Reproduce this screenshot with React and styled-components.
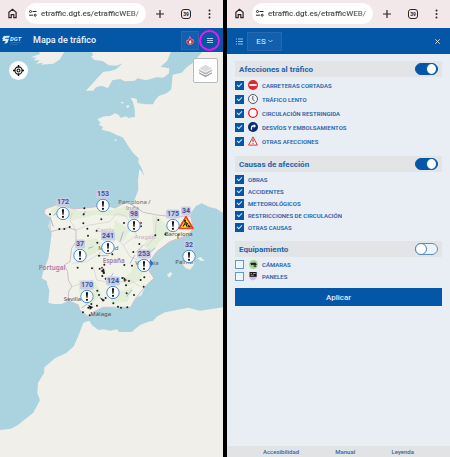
import React from "react";
import styled, { createGlobalStyle } from "styled-components";

const BLUE = "#0456a6";

const GlobalStyle = createGlobalStyle`
  *, *::before, *::after { box-sizing: border-box; }
  html, body, #root { height: 100%; }
  body { margin: 0; background: #000; font-family: Roboto, "Liberation Sans", sans-serif; }
  button, input { font: inherit; margin: 0; padding: 0; }
  button { border: 0; background: none; color: inherit; display: grid; place-items: center; }
  svg { display: block; }
`;

const Screens = styled.div`
  display: grid;
  grid-template-columns: 1fr 1fr;
  gap: 4px;
  min-height: 100%;
`;

const Phone = styled.section`
  display: flex;
  flex-direction: column;
  min-width: 0;
  background: #e8eef4;
`;

const BrowserBar = styled.div`
  display: flex;
  align-items: center;
  height: 28px;
  padding: 0 12px 1px 8px;
  background: #f2e7e9;
  color: #2c2527;
`;

const AddressPill = styled.label`
  display: flex;
  align-items: center;
  gap: 4px;
  flex: 1;
  min-width: 0;
  height: 21px;
  margin: 0 10px 0 8px;
  padding: 0 3px 0 4px;
  border-radius: 11px;
  background: #fff;
`;

const Address = styled.input`
  flex: 1;
  min-width: 0;
  border: 0;
  outline: 0;
  font-size: 8px;
  font-weight: 500;
  color: transparent;
  background: linear-gradient(90deg, #444 75%, #888) text;
`;

const BarActions = styled.div`
  display: flex;
  align-items: center;
  gap: 17px;
`;

const TabCount = styled.button`
  width: 10px;
  height: 10px;
  border: 1px solid #2c2527;
  border-radius: 3px;
  font-size: 5px;
  font-weight: 700;
`;

const AppHeader = styled.header`
  display: flex;
  align-items: center;
  height: ${(p) => p.$height};
  padding: ${(p) => p.$padding};
  background: ${BLUE};
  color: #e4eef8;
`;

const AppTitle = styled.h1`
  flex: 1;
  margin: 0 0 0 11px;
  font-size: 9px;
  font-weight: 600;
`;

const HeaderBox = styled.button`
  width: ${(p) => p.$width};
  height: 19px;
  border: 1px solid #2569b2;
  background: #1260ad;
`;

const MenuButton = styled.button`
  width: 21px;
  height: 21px;
  border: 2px solid #fb0ff0;
  border-radius: 50%;
`;

const LanguageButton = styled(HeaderBox)`
  display: flex;
  align-items: center;
  justify-content: center;
  gap: 2px;
  margin: 0 auto 0 4px;
  font-size: 8px;
`;

const MapArea = styled.main`
  position: relative;
  flex: 1;
  overflow: hidden;
  background: #aad3df;
`;

const MapDrawing = styled.svg`
  position: absolute;
  inset: 0;
  width: 100%;
  height: 100%;
`;

const LocateButton = styled.button`
  position: absolute;
  left: 9px;
  top: 9px;
  width: 19px;
  height: 19px;
  border-radius: 50%;
  background: #fff;
`;

const LayersButton = styled.button`
  position: absolute;
  right: 5px;
  top: 6px;
  width: 25px;
  height: 25px;
  border: 1px solid #b5bcbd;
  border-radius: 2px;
  background: #fff;
`;

const Pin = styled.button`
  position: absolute;
  left: ${(p) => p.$x}px;
  top: ${(p) => p.$y}px;
  display: flex;
  flex-direction: column;
  align-items: center;
  transform: translate(-50%, -50%);
`;

const PinCount = styled.span`
  padding: 0 1px;
  border-radius: 2px;
  background: #c9cde5;
  color: #3e55a0;
  font: 700 7px/9px Roboto, sans-serif;
`;

const Panel = styled.form`
  display: flex;
  flex-direction: column;
  gap: 8px;
  flex: 1;
  padding: 7px 8px;
  color: #1f62a9;
`;

const Group = styled.section`
  display: flex;
  flex-direction: column;
`;

const GroupHeader = styled.label`
  display: flex;
  align-items: center;
  justify-content: space-between;
  height: 16px;
  margin-bottom: 1px;
  padding: 0 4px;
  background: #e3e4e6;
  font-size: 8px;
  font-weight: 700;
`;

const Switch = styled.input`
  appearance: none;
  display: flex;
  align-items: center;
  width: 23px;
  height: 12px;
  border: 1px solid #5b8fc4;
  border-radius: 6px;
  background: #eef3f8;

  &::before {
    content: "";
    width: 12px;
    height: 12px;
    margin-left: -1px;
    border: 1px solid #4a84be;
    border-radius: 50%;
    background: #fff;
  }

  &:checked {
    border-color: ${BLUE};
    background: ${BLUE};
  }

  &:checked::before {
    margin-left: 10px;
    border-color: ${BLUE};
  }
`;

const OptionRow = styled.label`
  display: flex;
  align-items: center;
  gap: 4px;
  height: ${(p) => p.$height};
  font-size: 6px;
  font-weight: 600;
`;

const OptionIcon = styled.span`
  display: grid;
  place-items: center;
  width: 10px;
  height: 10px;
`;

const Check = styled.input`
  appearance: none;
  display: grid;
  place-items: center;
  width: 9px;
  height: 9px;
  border: 1px solid #5f9bc9;
  background: #f1f6fa;

  &:checked {
    border-color: ${BLUE};
    background: ${BLUE};
  }

  &:checked::before {
    content: "";
    width: 5px;
    height: 3px;
    border: solid #d4e6f6;
    border-width: 0 0 1px 1px;
    transform: translateY(-1px) rotate(-45deg);
  }
`;

const ApplyButton = styled.button`
  height: 18px;
  margin-top: -2px;
  background: ${BLUE};
  color: #e4eef8;
  font-size: 8px;
  font-weight: 500;
`;

const Footer = styled.footer`
  display: flex;
  justify-content: space-between;
  height: 11px;
  padding: 0 36px;
  background: #e2e3e4;
`;

const FooterLink = styled.a`
  color: #2a69ab;
  font-size: 6px;
  font-weight: 500;
  line-height: 11px;
  text-decoration: none;
`;

const HomeIcon = () => (
  <svg width="9" height="11" viewBox="0 0 9 11" fill="none" stroke="currentColor" strokeWidth="1.2">
    <path d="M.9 4.3 4.5 1.3 8.1 4.3V9.6H5.8V6.6H3.2V9.6H.9Z" />
  </svg>
);

const TuneIcon = () => (
  <svg width="8" height="7" viewBox="0 0 8 7" fill="none" stroke="currentColor" strokeWidth="1">
    <circle cx="1.5" cy="1.5" r="1" /><path d="M3.5 1.5H7.5M0 5.2H4" /><circle cx="6.2" cy="5.2" r="1" />
  </svg>
);

const PlusIcon = () => (
  <svg width="8" height="8" viewBox="0 0 8 8" stroke="currentColor" strokeWidth="1.2"><path d="M4 0V8M0 4H8" /></svg>
);

const DotsIcon = () => (
  <svg width="3" height="10" viewBox="0 0 3 10" fill="currentColor">
    <circle cx="1.5" cy="1.6" r="1" /><circle cx="1.5" cy="5" r="1" /><circle cx="1.5" cy="8.4" r="1" />
  </svg>
);

const Logo = () => (
  <svg width="20" height="11" viewBox="0 0 20 11" role="img" aria-label="DGT">
    <path d="M1.8 1 8 .8 6.8 2.8H3.5L3 3.7H7L5.3 8 2.2 8.8 3.8 6H.2L1.4 4.4 0 4Z" fill="#dcebf8" />
    <text x="8" y="6" fontFamily="Roboto, sans-serif" fontSize="6" fontWeight="700" fontStyle="italic" fill="#dcebf8">DGT</text>
    <path d="M8 7.5H19M8 9.3H16" stroke="#3f82c2" strokeWidth=".6" />
  </svg>
);

const FlameIcon = () => (
  <svg width="8" height="9" viewBox="0 0 8 9">
    <path d="M3.6.5C3.8 2 6.4 2.6 6 4.1L7.3 3.6C8 7 6.4 8.5 4 8.5S0 7.2.7 4.2L2 5C2 3 4 2.5 3.6.5Z" fill="#e51b2b" stroke="#f1b9c5" strokeWidth=".5" />
    <path d="M4.2 4C5.6 5.2 6 7.4 4.3 7.6S2.2 6.3 4.2 4Z" fill="#fff" />
  </svg>
);

const MenuIcon = () => (
  <svg width="6" height="7" viewBox="0 0 6 7" stroke="#a9d1ee" strokeWidth="1"><path d="M0 1.5H6M0 3.5H6M0 5.5H6" /></svg>
);

const ListIcon = () => (
  <svg width="7" height="7" viewBox="0 0 7 7" stroke="#c7def3" strokeWidth=".8"><path d="M0 1H1M2 1H7M0 3.5H1M2 3.5H7M0 6H1M2 6H7" /></svg>
);

const ChevronIcon = () => (
  <svg width="5" height="4" viewBox="0 0 5 4" fill="none" stroke="currentColor" strokeWidth=".7"><path d="M.5 1 2.5 3 4.5 1" /></svg>
);

const CloseIcon = () => (
  <svg width="5" height="5" viewBox="0 0 5 5" stroke="currentColor" strokeWidth=".9"><path d="M.3.3 4.7 4.7M4.7.3.3 4.7" /></svg>
);

const LocateIcon = () => (
  <svg width="11" height="11" viewBox="0 0 12 12" fill="none" stroke="#111" strokeWidth="1.2">
    <circle cx="6" cy="6" r="4" /><circle cx="6" cy="6" r="1.6" /><path d="M6 0V2.6M6 9.4V12M0 6H2.6M9.4 6H12" strokeWidth="1.5" />
  </svg>
);

const LayersIcon = () => (
  <svg width="15" height="14" viewBox="0 0 15 14">
    <path d="M1 9.6 7.5 13.3 14 9.6V8.2L7.5 11.4 1 8.2Z" fill="#a0a0a0" />
    <path d="M1 7 7.5 10.7 14 7V5.6L7.5 8.8 1 5.6Z" fill="#b4b4b4" />
    <path d="M1 4.4 7.5.8 14 4.4 7.5 8Z" fill="#dcdcdc" />
  </svg>
);

const AlertIcon = () => (
  <svg width="14" height="14" viewBox="0 0 14 14">
    <circle cx="7" cy="7" r="6.2" fill="#fff" stroke="#498fce" />
    <path d="M8.1 2.8 7.6 8.2H6.4L5.9 2.8Z" fill="#111" /><circle cx="7" cy="10.3" r="1.1" fill="#111" />
  </svg>
);

const WorksIcon = () => (
  <svg width="16" height="14" viewBox="0 0 16 14">
    <path d="M8 1.2 15 13H1Z" fill="#ffdc18" stroke="#ef3a24" strokeWidth="1.6" strokeLinejoin="round" />
    <circle cx="7" cy="5.2" r=".9" /><path d="M6.5 6 9.5 8.4 8 9 9 11M7.3 7.5 5 11M10 9.3 12 11.2H9.5" fill="none" stroke="#15170c" strokeWidth="1.1" />
  </svg>
);

const optionIcons = {
  closed: (
    <svg width="10" height="10" viewBox="0 0 10 10"><circle cx="5" cy="5" r="5" fill="#dc2932" /><path d="M1.4 5H8.6" stroke="#fff" strokeWidth="1.8" /></svg>
  ),
  slow: (
    <svg width="10" height="10" viewBox="0 0 10 10" fill="none" stroke="#273442"><circle cx="5" cy="5" r="4.5" fill="#f4f7fa" strokeWidth=".8" /><path d="M4.8 2V5.2L6.5 7.2" strokeWidth=".8" /></svg>
  ),
  restricted: (
    <svg width="10" height="10" viewBox="0 0 10 10"><circle cx="5" cy="5" r="4.3" fill="#fff" stroke="#f2171d" strokeWidth="1.3" /></svg>
  ),
  detour: (
    <svg width="10" height="10" viewBox="0 0 10 10"><circle cx="5" cy="5" r="5" fill="#082b72" /><path d="M3.5 7.8V5.2Q3.5 4 4.8 4H6" fill="none" stroke="#fff" strokeWidth="1.3" /><path d="M5.8 2 8 4 5.8 6Z" fill="#fff" /></svg>
  ),
  other: (
    <svg width="10" height="10" viewBox="0 0 10 10"><path d="M5 .9 9.4 9.1H.6Z" fill="#fff" stroke="#e62e36" strokeWidth="1" strokeLinejoin="round" /><path d="M5 3.3V6.3M5 7.1V8.1" stroke="#222" strokeWidth=".9" /></svg>
  ),
  camera: (
    <svg width="9" height="9" viewBox="0 0 9 9"><circle cx="4.5" cy="4.5" r="4.5" fill="#a9d48d" /><path d="M1.3 3 6.2 2.6 7.8 4.2 6.8 5.7 4.5 4.8 2.2 5.2Z" fill="#16231a" /><path d="M5 5V6.5H7.2" fill="none" stroke="#16231a" strokeWidth=".8" /></svg>
  ),
  panel: (
    <svg width="8" height="10" viewBox="0 0 8 10"><path d="M0 1H8V5Q8 8 4 9.6Q0 8 0 5Z" fill="#c4bfe7" /><path d="M.6 1H7.6V5.8H.6Z" fill="#17191d" /><path d="M1.5 2.5H3M4 2.5H6.7M1.5 4.2H5" stroke="#e2b625" strokeWidth=".8" /></svg>
  ),
};

const mainland =
  "M680 0 606 6 582 36 560 52 545 68 518 74 514 118 500 130 476 138 464 152 460 163 438 163 412 159 410 146 392 143 399 157 404 176 405 200 386 204 378 199 362 203 355 194 345 190 330 198 312 199 292 208 302 218 296 224 309 230 305 239 330 245 350 255 368 262 376 274 386 290 400 310 416 325 415 337 425 355 434 380 424 364 418 358 414 390 415 420 408 438 402 454 380 456 345 474 318 466 300 472 265 473 220 477 197 470 189 459 166 466 135 477 141 487 133 490 150 505 145 530 155 550 150 590 145 625 128 670 125 685 140 693 142 704 148 720 145 758 160 762 185 762 205 752 222 755 235 765 239 780 268 802 279 787 310 772 345 775 392 772 407 745 425 735 435 710 462 685 448 664 442 645 470 605 485 590 510 575 540 565 565 555 580 535 572 510 572 490 588 468 605 460 630 472 650 476 680 496Z";
const spain =
  "M135 477 166 466 189 459 197 470 220 477 265 473 318 466 345 474 380 456 402 468 430 487 470 495 520 500 572 498 580 535 565 555 510 575 470 605 442 645 448 664 462 685 435 710 407 745 392 772 310 772 279 787 268 802 239 780 235 765 205 752 206 725 216 710 205 690 203 665 193 645 210 635 215 595 228 575 228 540 205 533 150 545 150 505 133 490Z";
const africa =
  "M0 1140 32 1136 55 1124 75 1108 100 1088 120 1050 112 1030 114 998 132 970 133 952 165 925 200 908 222 888 238 850 250 818 268 812 276 826 295 840 312 838 330 842 352 838 357 846 395 846 420 825 445 815 460 812 470 800 495 787 565 773 600 782 680 770V1300H0Z";
const britain =
  "M270 0 280 14 273 20 283 30 308 33 326 46 350 47 368 40 348 58 332 63 310 65 290 86 273 106 257 122 280 122 288 112 304 107 324 114 337 91 361 87 374 94 405 92 412 85 438 91 470 82 490 83 507 70 508 55 482 50 502 32 515 0Z";
const ireland = "M115 0 120 12 92 22 110 23 100 31 119 31 108 41 130 38 122 44 160 41 180 28 196 0Z";

const incidents = [
  [150, 493], [178, 537], [193, 537], [209, 531], [253, 475], [251, 493], [304, 508], [250, 520], [262, 536], [264, 557], [290, 542], [292, 578], [297, 617],
  [233, 653], [276, 655], [299, 656], [311, 669], [307, 678], [317, 686], [313, 644], [292, 722], [297, 735], [317, 744], [274, 762], [265, 773], [291, 767],
  [249, 787], [269, 796], [392, 522], [372, 519], [423, 529], [475, 510], [418, 582], [400, 606], [373, 645], [396, 647], [367, 684], [387, 693], [378, 706],
  [354, 770], [363, 773], [382, 772], [402, 735], [431, 710], [433, 682], [466, 556], [496, 553], [337, 613], [340, 760], [380, 730], [345, 700], [422, 690],
];

const placeLabels = [
  { text: "Pamplona /", x: 355, y: 462, color: "#65645f" },
  { text: "Iruña", x: 378, y: 480, color: "#8b8985", size: 15 },
  { text: "Castilla", x: 291, y: 546, color: "#c8a9c5", size: 15 },
  { text: "Aragón", x: 404, y: 568, color: "#c8a9c5" },
  { text: "Madrid", x: 295, y: 600, color: "#656461" },
  { text: "Sevilla", x: 191, y: 752, color: "#4c4b49" },
  { text: "Málaga", x: 271, y: 797, color: "#4c4b49" },
  { text: "Barcelona", x: 494, y: 557, color: "#4c4b49" },
  { text: "Valencia", x: 406, y: 645, color: "#5c5a57" },
  { text: "Palma", x: 526, y: 641, color: "#4c4b49" },
  { text: "Portugal", x: 116, y: 660, color: "#a679a5", size: 19, weight: 600 },
  { text: "España", x: 308, y: 638, color: "#a679a5", size: 19, weight: 600 },
];

const pins = [
  { count: 172, x: 63, y: 157 },
  { count: 153, x: 103, y: 149 },
  { count: 98, x: 134, y: 169 },
  { count: 175, x: 173, y: 169 },
  { count: 34, x: 186, y: 166, works: true },
  { count: 241, x: 108, y: 191 },
  { count: 37, x: 80, y: 199 },
  { count: 253, x: 144, y: 209 },
  { count: 32, x: 189, y: 200 },
  { count: 170, x: 87, y: 240 },
  { count: 124, x: 113, y: 236 },
];

const TrafficMap = () => (
  <MapDrawing role="img" aria-label="Mapa de tráfico">
    <g transform="scale(.3333) translate(0 -6)">
      <g fill="#f0efe9">
        <path d={mainland} /><path d={africa} /><path d={britain} /><path d={ireland} />
        <path d="M363 156h8v4h-8ZM378 168l8-3 2 5-7 4ZM342 268l10 2-6 4Z" />
        <path d="M545 637 560 625 580 632 582 645 570 659 556 654ZM592 625 602 621 614 632 603 633ZM501 674 512 666 517 671 508 683Z" />
      </g>
      <path d={spain} fill="#f1f3e8" stroke="#cdbdce" strokeWidth="3" />
      <g fill="#d9e9ca" opacity=".55">
        <path d="M150 480 180 465 235 483 340 479 380 467 420 495 370 500 290 494 220 510 170 503Z" />
        <path d="M250 570 290 565 315 591 285 610 250 627 220 615 230 590ZM455 497 480 503 515 545 478 576 455 605 430 585 460 545ZM410 630 435 650 420 690 380 710 365 690 390 670ZM235 690 288 697 305 735 275 760 238 730ZM345 510 390 540 370 574 340 560ZM330 735 400 710 382 755 335 760Z" />
      </g>
      <g fill="none" stroke="#d5c7d6" strokeWidth="2">
        <path d="M217 488 210 510 228 540 265 526 330 515 350 490 380 500 410 555 370 585 350 565 300 610 260 635 218 640M370 585 390 620 440 640M280 650 290 690 340 700 390 690 420 710M215 710 280 690M470 500 465 560 440 590" />
      </g>
      <g stroke="#86a8cf" strokeWidth="3" opacity=".75">
        <path d="M150 500 160 530M170 488 160 497M249 498 256 484M370 545 360 575M430 585 410 606M405 615 390 640M340 670 325 690M440 617 466 593M295 617H325M265 595 280 590M395 720 380 740M265 760 245 774" />
      </g>
      <g fill="#1c2020">
        {incidents.map(([x, y]) => <circle key={`${x}-${y}`} cx={x} cy={y} r="3" />)}
        <path d="M299 742 315 750 309 755ZM265 765 280 771 270 779ZM370 680 380 690 372 695ZM302 663 312 655 315 672Z" />
      </g>
      <g fill="#a82832"><circle cx="306" cy="653" r="3" /><circle cx="423" cy="519" r="3" /><circle cx="376" cy="691" r="3" /></g>
      <path d="M450 628 461 640 450 652Z" fill="#2d78cd" /><path d="M534 552v14" stroke="#bd9b4a" strokeWidth="5" />
      <g fontFamily="Noto Sans, sans-serif">
        {placeLabels.map(({ text, x, y, color, size = 18, weight = 400 }) => (
          <text key={text} x={x} y={y} fill={color} fontSize={size} fontWeight={weight}>{text}</text>
        ))}
      </g>
    </g>
  </MapDrawing>
);

const Browser = () => (
  <BrowserBar>
    <button aria-label="Inicio"><HomeIcon /></button>
    <AddressPill>
      <TuneIcon />
      <Address aria-label="Dirección" defaultValue="etraffic.dgt.es/etrafficWEB/" />
    </AddressPill>
    <BarActions>
      <button aria-label="Nueva pestaña"><PlusIcon /></button>
      <TabCount aria-label="39 pestañas">39</TabCount>
      <button aria-label="Más opciones"><DotsIcon /></button>
    </BarActions>
  </BrowserBar>
);

const groups = [
  {
    title: "Afecciones al tráfico", on: true, height: "14px",
    options: [["CARRETERAS CORTADAS", "closed"], ["TRÁFICO LENTO", "slow"], ["CIRCULACIÓN RESTRINGIDA", "restricted"], ["DESVÍOS Y EMBOLSAMIENTOS", "detour"], ["OTRAS AFECCIONES", "other"]],
  },
  {
    title: "Causas de afección", on: true, height: "12px",
    options: [["OBRAS"], ["ACCIDENTES"], ["METEOROLÓGICOS"], ["RESTRICCIONES DE CIRCULACIÓN"], ["OTRAS CAUSAS"]],
  },
  { title: "Equipamiento", on: false, height: "12px", options: [["CÁMARAS", "camera"], ["PANELES", "panel"]] },
];

export default function App() {
  return (
    <>
      <GlobalStyle />
      <Screens>
        <Phone>
          <Browser />
          <AppHeader $height="24px" $padding="0 3px 0 2px">
            <Logo />
            <AppTitle>Mapa de tráfico</AppTitle>
            <HeaderBox $width="18px" aria-label="Incendios"><FlameIcon /></HeaderBox>
            <MenuButton aria-label="Menú"><MenuIcon /></MenuButton>
          </AppHeader>
          <MapArea>
            <TrafficMap />
            {pins.map(({ count, x, y, works }) => (
              <Pin key={count} $x={x} $y={y}>
                <PinCount>{count}</PinCount>
                {works ? <WorksIcon /> : <AlertIcon />}
              </Pin>
            ))}
            <LocateButton aria-label="Mi ubicación"><LocateIcon /></LocateButton>
            <LayersButton aria-label="Capas"><LayersIcon /></LayersButton>
          </MapArea>
        </Phone>
        <Phone>
          <Browser />
          <AppHeader $height="26px" $padding="0 10px 0 9px">
            <button aria-label="Lista"><ListIcon /></button>
            <LanguageButton $width="35px">ES<ChevronIcon /></LanguageButton>
            <button aria-label="Cerrar"><CloseIcon /></button>
          </AppHeader>
          <Panel onSubmit={(e) => e.preventDefault()}>
            {groups.map(({ title, on, height, options }) => (
              <Group key={title}>
                <GroupHeader>
                  {title}
                  <Switch type="checkbox" role="switch" defaultChecked={on} />
                </GroupHeader>
                {options.map(([label, icon]) => (
                  <OptionRow key={label} $height={height}>
                    <Check type="checkbox" defaultChecked={on} />
                    {icon && <OptionIcon>{optionIcons[icon]}</OptionIcon>}
                    {label}
                  </OptionRow>
                ))}
              </Group>
            ))}
            <ApplyButton type="submit">Aplicar</ApplyButton>
          </Panel>
          <Footer>
            <FooterLink href="#accesibilidad">Accesibilidad</FooterLink>
            <FooterLink href="#manual">Manual</FooterLink>
            <FooterLink href="#leyenda">Leyenda</FooterLink>
          </Footer>
        </Phone>
      </Screens>
    </>
  );
}
